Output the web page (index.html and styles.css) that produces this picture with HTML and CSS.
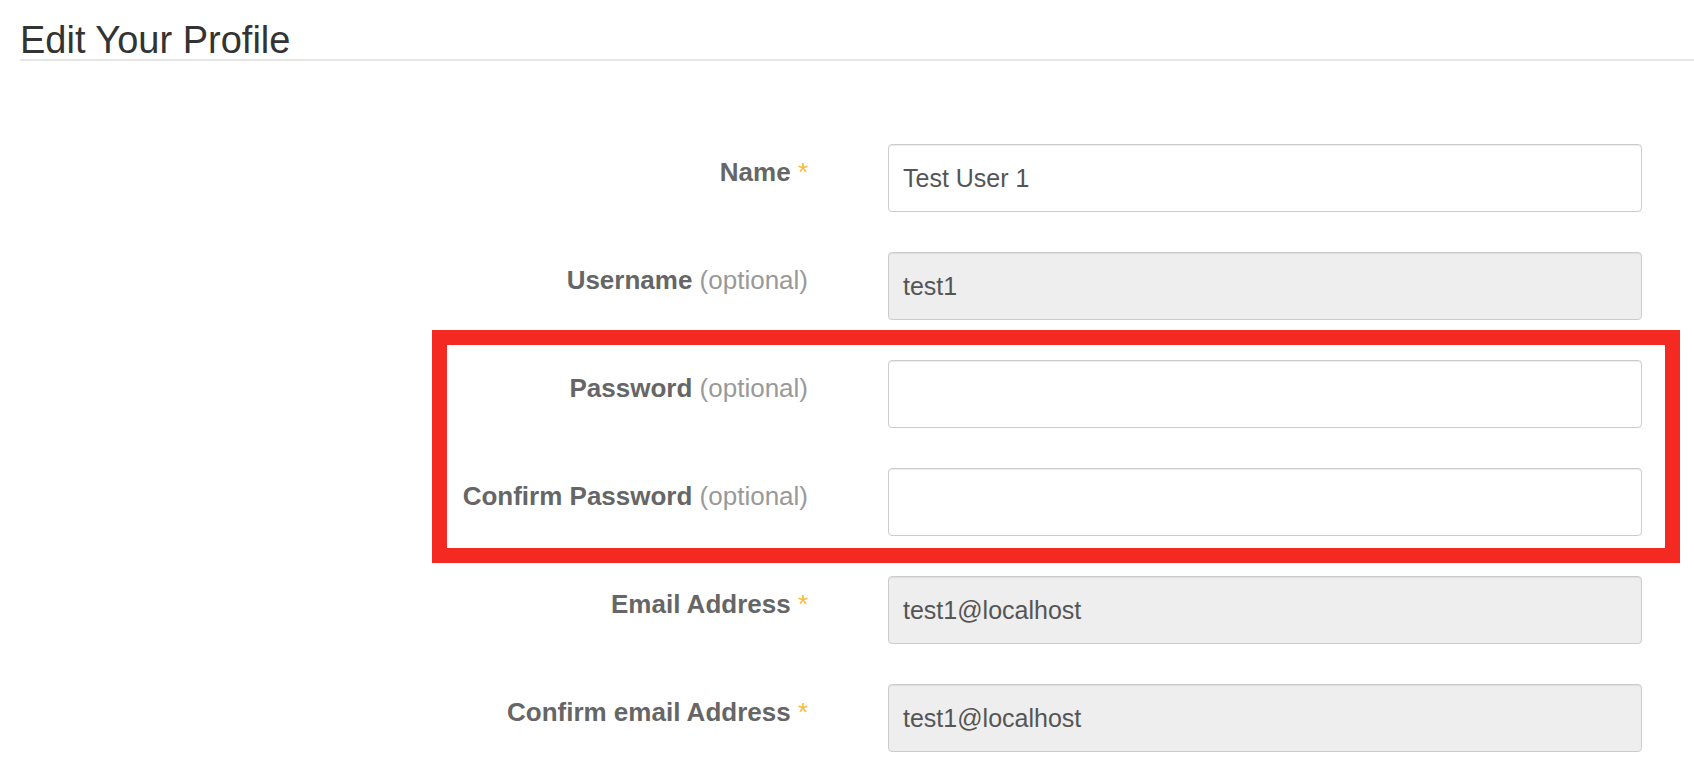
FILE: index.html
```html
<!DOCTYPE html>
<html lang="en">
<head>
  <meta charset="UTF-8">
  <meta name="viewport" content="width=device-width, initial-scale=1.0">
  <title>Edit Your Profile</title>
  <link rel="stylesheet" href="styles.css">
</head>
<body>
  <div class="page">
    <h1 class="page-title">Edit Your Profile</h1>

    <form class="profile-form">
      <label class="field-label" for="name">Name <span class="star">*</span></label>
      <input class="field-input" id="name" type="text" value="Test User 1">

      <label class="field-label" for="username">Username <span class="optional">(optional)</span></label>
      <input class="field-input" id="username" type="text" value="test1" disabled>

      <label class="field-label" for="password">Password <span class="optional">(optional)</span></label>
      <input class="field-input" id="password" type="password">

      <label class="field-label" for="password2">Confirm Password <span class="optional">(optional)</span></label>
      <input class="field-input" id="password2" type="password">

      <label class="field-label" for="email">Email Address <span class="star">*</span></label>
      <input class="field-input" id="email" type="text" value="test1@localhost" disabled>

      <label class="field-label" for="email2">Confirm email Address <span class="star">*</span></label>
      <input class="field-input" id="email2" type="text" value="test1@localhost" disabled>

      <!-- annotation drawn over the password fields -->
      <div class="highlight"></div>
    </form>
  </div>
</body>
</html>
```

FILE: styles.css
```css
body {
  margin: 0;
  font-family: "Liberation Sans", Arial, sans-serif;
  background-color: #FFF;
  color: #333;
}
.page {
  padding: 22px 0 0 20px;
}
.page-title {
  margin: 0;
  font-size: 38px;
  font-weight: normal;
  line-height: 37px;
  color: #333;
  border-bottom: 2px solid #E5E5E5;
}
.profile-form {
  position: relative;
  display: grid;
  grid-template-columns: 788px 754px;
  column-gap: 80px;
  row-gap: 40px;
  margin-top: 83px;
}
.field-label {
  padding-top: 13px;
  font-size: 26px;
  font-weight: bold;
  line-height: 1.2;
  text-align: right;
  color: #666;
}
.optional {
  font-weight: normal;
  color: #999;
}
.star {
  font-weight: normal;
  color: #F4BC3C;
}
.field-input {
  box-sizing: border-box;
  height: 68px;
  width: 100%;
  padding: 0 14px;
  font-family: "Liberation Sans", Arial, sans-serif;
  font-size: 25px;
  color: #555;
  background-color: #FFF;
  border: 1px solid #CCC;
  border-radius: 4px;
  box-shadow: inset 0 1px 1px rgba(0, 0, 0, 0.075);
}
.field-input:disabled {
  background-color: #EEE;
  color: #555;
  -webkit-text-fill-color: #555;
  opacity: 1;
}
.highlight {
  position: absolute;
  left: 412px;
  top: 186px;
  width: 1248px;
  height: 233px;
  box-sizing: border-box;
  border: 15px solid #F42A22;
  pointer-events: none;
}
```
